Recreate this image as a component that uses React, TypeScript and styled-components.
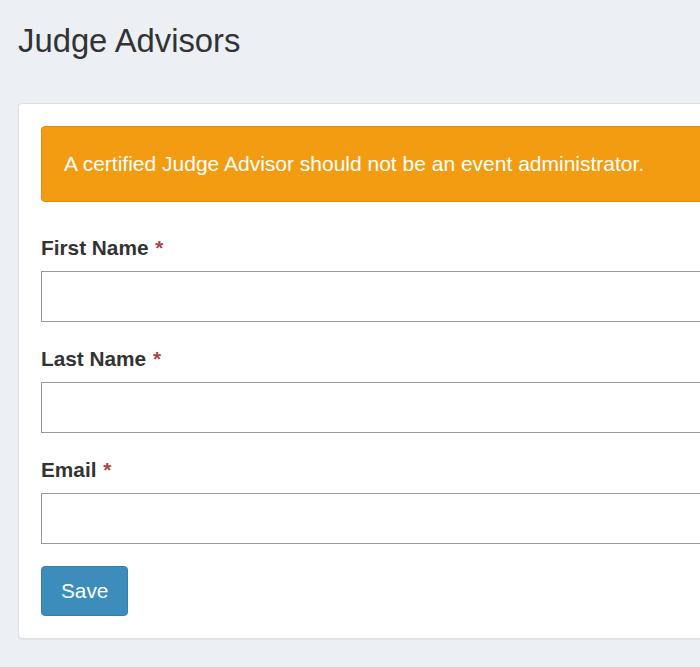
import React from "react";
import styled, { createGlobalStyle } from "styled-components";

const Global = createGlobalStyle`
  html, body {
    margin: 0;
    padding: 0;
    overflow: hidden;
    background: #ecf0f5;
  }
  body {
    font-family: "Liberation Sans", Arial, sans-serif;
    color: #333;
    font-size: 21px;
  }
  * { box-sizing: border-box; }
`;

const Page = styled.div`
  width: 780px;
  min-height: 667px;
  padding: 23px 18px 20px 18px;
  display: flex;
  flex-direction: column;
`;

const Title = styled.h1`
  margin: 0;
  font-size: 32.8px;
  font-weight: 400;
  line-height: 36px;
  color: #333;
`;

const Card = styled.div`
  margin-top: 44px;
  background: #fff;
  border: 1px solid #dcdfe3;
  border-radius: 4px;
  box-shadow: 0 1px 1px rgba(0, 0, 0, 0.06);
  padding: 22px;
  display: flex;
  flex-direction: column;
  align-items: flex-start;
`;

const Alert = styled.div`
  align-self: stretch;
  background: #f39c12;
  border: 1px solid #e08e0b;
  border-radius: 4px;
  color: #fff;
  padding: 22px 22px;
  line-height: 30px;
  font-size: 21px;
  margin-bottom: 31px;
`;

const Group = styled.div`
  align-self: stretch;
  display: flex;
  flex-direction: column;
  align-items: flex-start;
  margin-bottom: 22px;
`;

const Label = styled.label`
  font-weight: 700;
  font-size: 20.8px;
  line-height: 30px;
  margin-bottom: 8px;
  color: #333;
`;

const Req = styled.span`
  color: #a94442;
  margin-left: 1px;
`;

const Input = styled.input`
  display: block;
  width: 100%;
  height: 51px;
  border: 1px solid #999;
  border-radius: 0;
  background: #fff;
  font: inherit;
  padding: 9px 18px;
  outline: none;
`;

const Button = styled.button`
  background: #3c8dbc;
  border: 1px solid #367fa9;
  border-radius: 4px;
  color: #fff;
  font-family: "Liberation Sans", Arial, sans-serif;
  font-size: 20.8px;
  line-height: 30px;
  padding: 9px 19px;
  cursor: pointer;
`;

const fields = ["First Name", "Last Name", "Email"];

export default function App() {
  return (
    <>
      <Global />
      <Page>
        <Title>Judge Advisors</Title>
        <Card>
          <Alert>A certified Judge Advisor should not be an event administrator.</Alert>
          {fields.map((f) => (
            <Group key={f}>
              <Label>
                {f} <Req>*</Req>
              </Label>
              <Input type={f === "Email" ? "email" : "text"} />
            </Group>
          ))}
          <Button>Save</Button>
        </Card>
      </Page>
    </>
  );
}
